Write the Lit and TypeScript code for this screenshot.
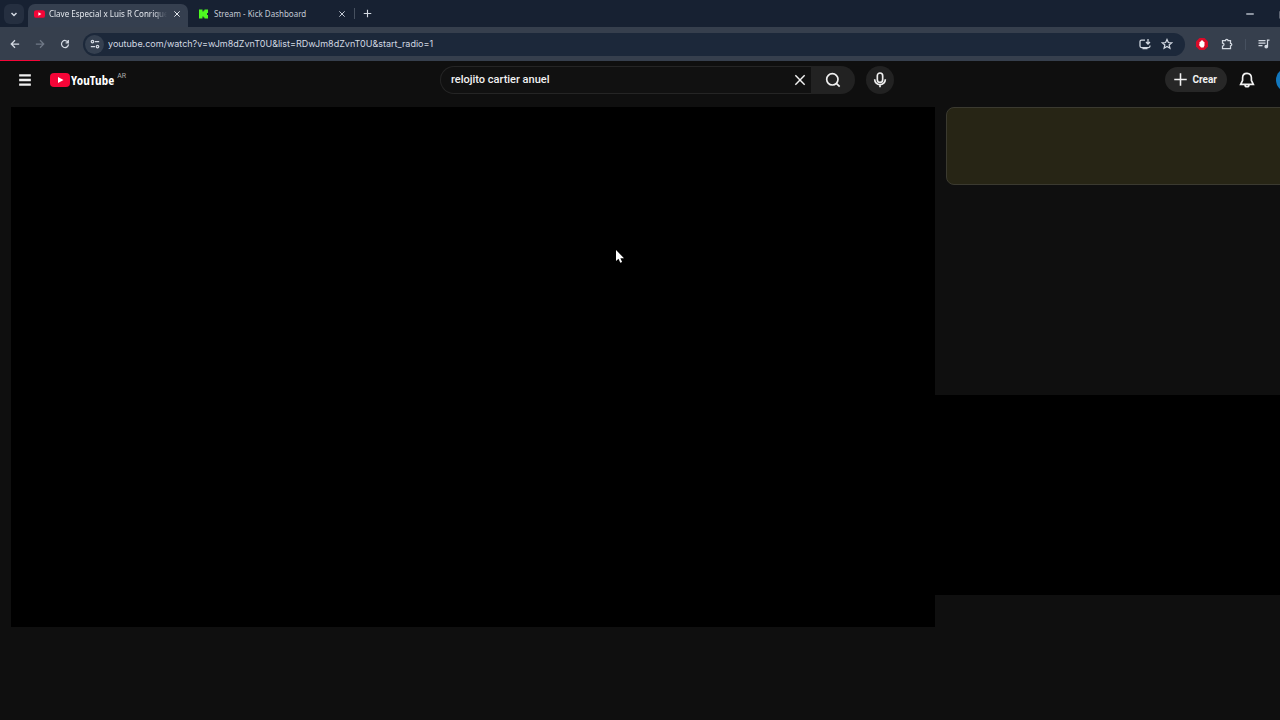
import { LitElement, html, css, svg } from "lit";
import { customElement, property, state } from "lit/decorators.js";

const icons: Record<string, unknown> = {
  chevron: svg`<path d="M7 10l5 5 5-5" stroke-width="3"/>`,
  close: svg`<path d="M4 4l16 16M20 4L4 20"/>`,
  plus: svg`<path d="M12 2v20M2 12h20"/>`,
  back: svg`<path d="M22 12H4M12 3l-9 9 9 9"/>`,
  forward: svg`<path d="M2 12h18M12 3l9 9-9 9"/>`,
  reload: svg`<path d="M19.5 8A8.5 8.5 0 1 0 20.500 13M20 2.500V9h-6.500"/>`,
  tune: svg`<circle cx="6" cy="6" r="3"/><path d="M12 6h10M2 18h10"/><circle cx="18" cy="18" r="3"/>`,
  install: svg`<path d="M12 4H5a3 3 0 0 0-3 3v9a3 3 0 0 0 3 3h14a3 3 0 0 0 3-3v-1M7 21h10M18 2v9M14 8l4 4 4-4"/>`,
  star: svg`<path d="M12 3l2.700 6 6.500.600-4.900 4.300 1.500 6.500L12 17l-5.800 3.400 1.500-6.500-4.900-4.300 6.500-.600z"/>`,
  puzzle: svg`<path d="M3 5h6a2.500 2.500 0 0 1 5 0h5v5.500a2.500 2.500 0 0 1 0 5V21H3v-5a3 3 0 0 0 0-6z"/>`,
  queue: svg`<path d="M1 5h14M1 10h14M1 15h8M19 17V4h4"/><circle cx="16.500" cy="17" r="2.500" fill="currentColor"/>`,
  minimize: svg`<path d="M3 12h18"/>`,
  maximize: svg`<path d="M3 7h14v14H3zM7 7V3h14v14h-4"/>`,
  menu: svg`<path d="M2 4h20M2 12h20M2 20h20"/>`,
  search: svg`<circle cx="11" cy="11" r="8.500"/><path d="M17 17l5 5"/>`,
  mic: svg`<rect x="8" y="1.500" width="8" height="14" rx="4"/><path d="M4 11a8 8 0 0 0 16 0M12 19v4"/>`,
  bell: svg`<path d="M12 2c-4.300 0-6.600 3-6.600 6.700v4L2.500 18.500h19L18.600 12.700v-4C18.600 5 16.300 2 12 2zM9 19a3 3 0 0 0 6 0"/>`,
};

@customElement("ui-icon")
export class UiIcon extends LitElement {
  @property() name = "close";
  @property({ type: Number }) weight = 2;

  static styles = css`
    :host { display: block; flex: none; width: 12px; height: 12px; }
    svg { display: block; width: 100%; height: 100%; fill: none; stroke: currentColor; }
  `;

  render() {
    return html`<svg viewBox="0 0 24 24" stroke-width=${this.weight} aria-hidden="true">${icons[this.name]}</svg>`;
  }
}

const playBadge = html`<svg viewBox="0 0 20 14" aria-hidden="true">
  <rect width="20" height="14" rx="4" fill="#f50537"/>
  <path d="M8 4l5.500 3L8 10z" fill="#fff"/>
</svg>`;

@customElement("browser-chrome")
export class BrowserChrome extends LitElement {
  static styles = css`
    :host {
      display: block;
      font: 8px/12px "Noto Sans", "Open Sans", sans-serif;
      color: #d3d9e2;
    }
    button {
      display: flex; align-items: center; justify-content: center; flex: none;
      padding: 0; border: 0; background: none; color: inherit; font: inherit;
    }
    .strip { display: flex; height: 27px; background: #172132; }
    .tab-menu { width: 20px; height: 20px; margin: 4px; border-radius: 6px; background: #252f40; }
    .tab-menu ui-icon { width: 12px; height: 12px; }
    .tab {
      display: flex; align-items: center; gap: 4px; flex: 0 1 160px; box-sizing: border-box;
      min-width: 0; height: 23px; margin-top: 4px; padding: 0 5px 3px 6px; color: #c3cad5;
    }
    .tab.active { background: #353f4f; border-radius: 7px 7px 0 0; color: #e4e8ee; }
    .tab.idle { gap: 5px; padding: 0 6px 3px 10px; flex-basis: 166px; }
    .title { flex: 1; min-width: 0; overflow: hidden; white-space: nowrap; }
    .active .title { mask-image: linear-gradient(90deg, #000 88%, transparent); }
    .favicon { flex: none; width: 11px; height: 10px; }
    .favicon svg { display: block; width: 100%; height: 100%; }
    .close { width: 12px; height: 14px; }
    .close ui-icon { width: 8px; height: 8px; }
    .divider { flex: none; width: 1px; height: 11px; background: #46505f; align-self: center; }
    .new { width: 24px; height: 27px; }
    .new ui-icon { width: 9px; height: 9px; }
    .window { display: flex; margin-left: auto; margin-right: -12px; gap: 18px; }
    .window button { width: 16px; }
    .window ui-icon { width: 10px; height: 10px; }
    .toolbar {
      display: flex; align-items: center; box-sizing: border-box; height: 34px;
      padding: 0 6px 0 5px; background: #363f4d;
    }
    .nav { display: flex; gap: 5px; margin-right: 8px; }
    .nav button, .tools button { width: 20px; height: 20px; }
    .nav ui-icon { width: 10px; height: 10px; }
    .nav button[disabled] { color: #6f7886; }
    .omnibox {
      display: flex; align-items: center; flex: 1; height: 23px; min-width: 0;
      padding: 0 7px 0 2px; border-radius: 12px; background: #1c283a;
    }
    .site { width: 19px; height: 19px; border-radius: 50%; background: #354050; }
    .site ui-icon { width: 10px; height: 10px; }
    .url {
      flex: 1; min-width: 0; padding: 0 0 0 4px; border: 0; outline: 0; background: none;
      color: #d3d9e2; font: 9px/12px Inter, "Open Sans", sans-serif;
    }
    .omnibox .action { width: 22px; height: 22px; }
    .tools { display: flex; align-items: center; gap: 5px; padding-left: 7px; }
    .tools .divider { margin: 0 3px; }
    .blocker { display: block; width: 12px; height: 12px; }
  `;

  render() {
    return html`
      <div class="strip">
        <button class="tab-menu" aria-label="Buscar pestañas"><ui-icon name="chevron"></ui-icon></button>
        <div class="tab active">
          <span class="favicon">${playBadge}</span>
          <span class="title">Clave Especial x Luis R Conrique</span>
          <button class="close" aria-label="Cerrar"><ui-icon name="close" weight="3"></ui-icon></button>
        </div>
        <div class="tab idle">
          <span class="favicon"><svg viewBox="0 0 10 10" aria-hidden="true">
            <path d="M0.500 0.500h3.500v2h1v-1h1v-1h3.500v3.500h-1v2h1v3.500H6v-1H5v-1H4v2H0.500z" fill="#4dfa20"/></svg></span>
          <span class="title">Stream - Kick Dashboard</span>
          <button class="close" aria-label="Cerrar"><ui-icon name="close" weight="3"></ui-icon></button>
        </div>
        <span class="divider"></span>
        <button class="new" aria-label="Nueva pestaña"><ui-icon name="plus" weight="3"></ui-icon></button>
        <div class="window">
          <button aria-label="Minimizar"><ui-icon name="minimize" weight="3"></ui-icon></button>
          <button aria-label="Maximizar"><ui-icon name="maximize" weight="3"></ui-icon></button>
        </div>
      </div>
      <div class="toolbar">
        <div class="nav">
          <button aria-label="Atrás"><ui-icon name="back" weight="3"></ui-icon></button>
          <button aria-label="Adelante" disabled><ui-icon name="forward" weight="3"></ui-icon></button>
          <button aria-label="Recargar"><ui-icon name="reload" weight="3"></ui-icon></button>
        </div>
        <div class="omnibox">
          <button class="site" aria-label="Información del sitio"><ui-icon name="tune" weight="3"></ui-icon></button>
          <input class="url" aria-label="Dirección" .value=${"youtube.com/watch?v=wJm8dZvnT0U&list=RDwJm8dZvnT0U&start_radio=1"}>
          <button class="action" aria-label="Instalar"><ui-icon name="install" weight="2.500"></ui-icon></button>
          <button class="action" aria-label="Favorito"><ui-icon name="star" weight="2.500"></ui-icon></button>
        </div>
        <div class="tools">
          <button aria-label="Bloqueador"><svg class="blocker" viewBox="0 0 24 24" aria-hidden="true">
            <path d="M7 0h10l7 7v10l-7 7H7l-7-7V7z" fill="#d90b29"/>
            <path d="M7 12V8h2V6h2V4h2v2h2v2h2v7l-2 4h-5l-4-5z" fill="#fff"/></svg></button>
          <button aria-label="Extensiones"><ui-icon name="puzzle" weight="2.500"></ui-icon></button>
          <span class="divider"></span>
          <button aria-label="Control multimedia"><ui-icon name="queue" weight="2.500"></ui-icon></button>
        </div>
      </div>
    `;
  }
}

@customElement("site-header")
export class SiteHeader extends LitElement {
  @state() private query = "relojito cartier anuel";

  static styles = css`
    :host { display: block; position: relative; font: 12px/16px Roboto, sans-serif; color: #f1f1f1; }
    .progress { position: absolute; left: 0; top: -1px; width: 40px; height: 1px; background: #f50537; }
    .bar { display: flex; align-items: center; height: 37px; padding-left: 14px; overflow: hidden; }
    button {
      display: flex; align-items: center; justify-content: center; flex: none;
      padding: 0; border: 0; background: none; color: inherit; font: inherit;
    }
    .start { display: flex; align-items: center; gap: 14px; flex: 0 1 426px; }
    .menu { width: 22px; height: 28px; }
    .menu ui-icon { width: 14px; height: 14px; }
    .logo { display: flex; align-items: center; gap: 1px; color: #fff; text-decoration: none; }
    .logo svg { display: block; width: 20px; height: 14px; }
    .word { font: bold 13px/16px "Open Sans Condensed", "Roboto Condensed", Roboto, sans-serif; }
    .region { font-size: 7px; line-height: 8px; color: #aaa; align-self: flex-start; margin-left: 2px; }
    .search { display: flex; flex: 0 1 415px; height: 28px; }
    .field {
      display: flex; align-items: center; flex: 1; box-sizing: border-box; min-width: 0;
      padding: 0 4px 0 10px; border: 1px solid #252525; border-right: 0; border-radius: 14px 0 0 14px;
      background: #111;
    }
    .field input {
      flex: 1; min-width: 0; padding: 0; border: 0; outline: 0; background: none;
      color: #f1f1f1; font: 500 11px/16px Roboto, sans-serif;
    }
    .clear { width: 14px; }
    .clear ui-icon { width: 14px; height: 14px; }
    .go { width: 44px; border-radius: 0 14px 14px 0; background: #222; }
    .go ui-icon, .mic ui-icon, .bell ui-icon { width: 16px; height: 16px; }
    .mic { width: 28px; height: 28px; margin-left: 11px; border-radius: 50%; background: #222; }
    .end { display: flex; align-items: center; gap: 10px; margin-left: auto; margin-right: -20px; }
    .create {
      gap: 4px; height: 25px; padding: 0 10px 0 8px; border-radius: 13px; background: #272727;
      font: bold 10px/16px Roboto, sans-serif;
    }
    .create ui-icon { width: 15px; height: 15px; }
    .bell { width: 20px; height: 28px; margin-right: 9px; }
    .avatar { width: 24px; height: 24px; border-radius: 50%; background: #1277bd; }
  `;

  render() {
    return html`
      <div class="progress"></div>
      <header class="bar">
        <div class="start">
          <button class="menu" aria-label="Guía"><ui-icon name="menu" weight="4"></ui-icon></button>
          <a class="logo" href="#" aria-label="YouTube">${playBadge}<span class="word">YouTube</span><span class="region">AR</span></a>
        </div>
        <form class="search" @submit=${(e: Event) => e.preventDefault()}>
          <div class="field">
            <input aria-label="Buscar" .value=${this.query}
              @input=${(e: Event) => (this.query = (e.target as HTMLInputElement).value)}>
            <button class="clear" type="button" aria-label="Borrar" @click=${() => (this.query = "")}>
              <ui-icon name="close" weight="2.500"></ui-icon></button>
          </div>
          <button class="go" aria-label="Buscar"><ui-icon name="search" weight="2.500"></ui-icon></button>
        </form>
        <button class="mic" aria-label="Buscar por voz"><ui-icon name="mic" weight="2.500"></ui-icon></button>
        <div class="end">
          <button class="create"><ui-icon name="plus" weight="2.500"></ui-icon>Crear</button>
          <button class="bell" aria-label="Notificaciones"><ui-icon name="bell" weight="2.500"></ui-icon></button>
          <button class="avatar" aria-label="Cuenta"></button>
        </div>
      </header>
    `;
  }
}

@customElement("app-root")
export class AppRoot extends LitElement {
  static styles = css`
    :host { display: block; min-height: 100vh; overflow: hidden; background: #0f0f0f; }
    .watch {
      display: grid; grid-template-columns: minmax(0, 924fr) minmax(0, 345fr);
      align-items: start; padding: 9px 0 0 11px;
    }
    .player { aspect-ratio: 16 / 9; background: #000; }
    .side { display: flex; flex-direction: column; gap: 210px; }
    .panel {
      box-sizing: border-box; height: 78px; margin: 0 -12px 0 11px;
      border: 1px solid #3b3a30; border-radius: 8px; background: #272515;
    }
    .blank { height: 200px; background: #000; }
    .pointer { position: absolute; left: 615px; top: 249px; width: 10px; height: 15px; }
  `;

  render() {
    return html`
      <browser-chrome></browser-chrome>
      <site-header></site-header>
      <main class="watch">
        <section class="player" aria-label="Reproductor"></section>
        <aside class="side">
          <div class="panel"></div>
          <div class="blank"></div>
        </aside>
      </main>
      <svg class="pointer" viewBox="0 0 10 15" aria-hidden="true">
        <path d="M1 1v11l2.500-2.300L5.300 13.700l1.800-.800-1.700-3.700H9z" fill="#fff"/>
      </svg>
    `;
  }
}
